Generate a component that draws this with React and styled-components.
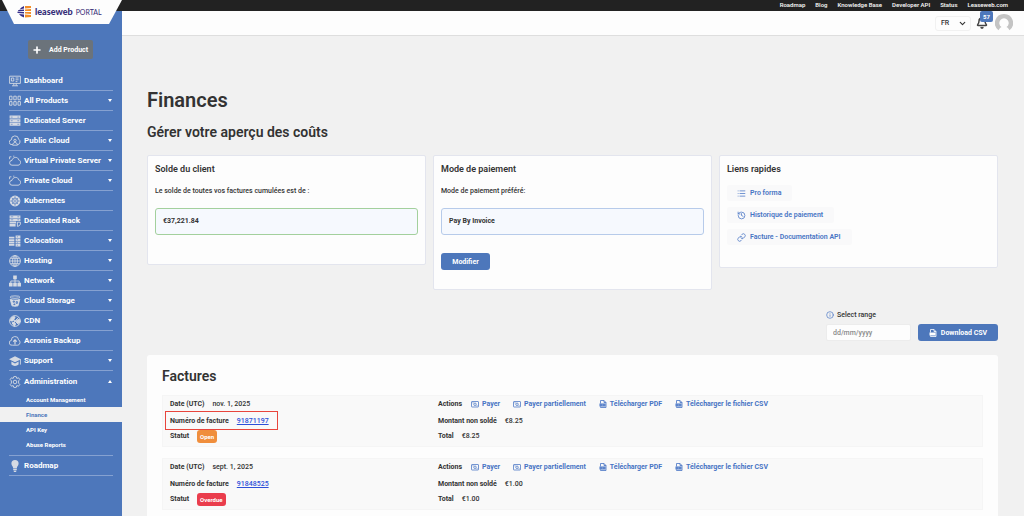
import React from "react";
import styled, { createGlobalStyle, css } from "styled-components";
import { Plus, List, History, Link, Info, Bell, ChevronDown } from "lucide-react";

const Global = createGlobalStyle`
  *, *::before, *::after { box-sizing: border-box; }
  body { margin: 0; background: #f1f1f1; color: #333; font: 500 7px/10px Roboto, sans-serif; }
  button, input, select { font: inherit; color: inherit; }
  a { text-decoration: none; color: inherit; }
  h1, h2, h3, p, ul, dl, dd { margin: 0; padding: 0; }
  ul { list-style: none; }
  svg { flex: none; display: block; }
`;

const Page = styled.div`
  display: grid;
  grid-template-columns: 122px minmax(0, 1fr);
  grid-template-rows: 11px auto;
  height: 100vh;
  overflow: hidden;
`;
const TopBar = styled.nav`
  grid-column: 1 / -1;
  display: flex;
  justify-content: flex-end;
  gap: 10px;
  padding-right: 16px;
  background: #222;
  color: #f2f2f2;
  font-size: 6px;
  font-weight: 600;
`;
const Sidebar = styled.aside`
  position: relative;
  background: #4d77bb;
  color: #fff;
  padding: 29px 9px 0;
`;
const Brand = styled.a`
  position: absolute;
  top: -11px;
  left: 0;
  width: 122px;
  height: 24px;
  display: flex;
  align-items: center;
  gap: 3px;
  padding-left: 17px;
  background: #fdfdfd;
  clip-path: polygon(2px 0, 100% 0, 109px 100%, 14px 100%);
  color: #352d77;
  font: 900 9px/12px Lato, sans-serif;
`;
const BrandTag = styled.span`
  font-size: 7px;
  font-weight: 400;
`;
const AddButton = styled.button`
  display: flex;
  align-items: center;
  gap: 7px;
  width: 65px;
  height: 19px;
  margin: 0 auto 12px 19px;
  padding: 0 4px;
  border: 0;
  border-radius: 2px;
  background: #6b737b;
  font-weight: 700;
  color: #fff;
`;
const NavItem = styled.li`
  border-bottom: ${(p) => (p.$open ? 0 : 1)}px solid #85a1d1;
`;
const NavLink = styled.a`
  display: flex;
  align-items: center;
  gap: 3px;
  height: ${(p) => (p.$open ? 21 : 19)}px;
  font-size: 8px;
  font-weight: 700;
  white-space: nowrap;
`;
const Caret = styled.span`
  margin-left: auto;
  margin-right: 1px;
  border: solid transparent;
  ${(p) => p.$up
    ? css`border-width: 0 2px 3px; border-bottom-color: #fff;`
    : css`border-width: 3px 2px 0; border-top-color: #fff;`}
`;
const SubList = styled.ul`
  margin: 0 -9px;
  padding-bottom: 3px;
  border: 0;
`;
const SubLink = styled.a`
  display: block;
  height: 15px;
  padding-left: 26px;
  font-size: 6px;
  line-height: 15px;
  font-weight: 700;
  background: ${(p) => (p.$active ? "#f1f1f1" : "none")};
  color: ${(p) => (p.$active ? "#4d77bb" : "#fff")};
`;
const Divider = styled.hr`
  margin: 0;
  border: 0;
  height: 1px;
  background: #85a1d1;
`;

const Content = styled.div`
  min-width: 0;
`;
const Header = styled.header`
  display: flex;
  justify-content: flex-end;
  align-items: center;
  gap: 5px;
  height: 25px;
  padding-right: 11px;
  background: #fdfdfd;
  border-bottom: 1px solid #dedede;
`;
const Language = styled.label`
  position: relative;
  display: flex;
  align-items: center;
  svg { position: absolute; right: 4px; pointer-events: none; }
`;
const LanguageSelect = styled.select`
  appearance: none;
  width: 36px;
  height: 15px;
  padding: 0 5px;
  border: 1px solid #f1f1f1;
  border-radius: 3px;
  background: #fdfdfd;
`;
const Alerts = styled.button`
  position: relative;
  margin-right: 2px;
  padding: 0;
  border: 0;
  background: none;
  color: #444;
`;
const Count = styled.span`
  position: absolute;
  left: 4px;
  top: -6px;
  width: 13px;
  height: 11px;
  border-radius: 2px;
  background: #4d77bb;
  color: #fff;
  font: 700 6px/11px Roboto, sans-serif;
  text-align: center;
`;

const Main = styled.main`
  padding: 52px 26px 0 25px;
`;
const Title = styled.h1`
  font-size: 20px;
  line-height: 24px;
  font-weight: 600;
`;
const Subtitle = styled.h2`
  margin: 10px 0 13px;
  font-size: 14px;
  line-height: 20px;
  font-weight: 600;
`;
const Cards = styled.div`
  display: grid;
  grid-template-columns: repeat(3, minmax(0, 1fr));
  align-items: start;
  gap: 7px;
`;
const Card = styled.section`
  padding: 7px 7px ${(p) => p.$bottom}px;
  background: #fdfdfd;
  border: 1px solid #e3e5ee;
  border-radius: 2px;
`;
const CardTitle = styled.h3`
  font-size: 9px;
  line-height: 12px;
  font-weight: 600;
`;
const CardText = styled.p`
  margin: 11px 0 12px;
`;
const Value = styled.div`
  height: 27px;
  padding: 0 7px;
  line-height: 25px;
  font-weight: 700;
  background: #f6f9fe;
  border: 1px solid ${(p) => (p.$positive ? "#a3d09d" : "#b7cbea")};
  border-radius: 3px;
`;
const Primary = styled.button`
  display: inline-flex;
  align-items: center;
  justify-content: center;
  gap: 4px;
  width: ${(p) => p.$width}px;
  height: 17px;
  padding: 0;
  border: 0;
  border-radius: 3px;
  background: #4d77bb;
  color: #fff;
  font-weight: 700;
`;
const CardFoot = styled.div`
  display: flex;
  margin-top: 18px;
`;
const QuickLinks = styled.ul`
  display: grid;
  justify-items: start;
  gap: 6px;
  margin-top: 10px;
`;
const QuickLink = styled.a`
  display: flex;
  align-items: center;
  gap: 4px;
  height: 16px;
  padding: 0 11px 0 10px;
  border-radius: 2px;
  background: #f9f9fa;
  color: #4774c4;
  font-weight: 600;
`;

const Filters = styled.form`
  display: flex;
  justify-content: flex-end;
  align-items: flex-end;
  gap: 7px;
  margin: 20px 0 14px;
`;
const Field = styled.div`
  display: grid;
  gap: 4px;
`;
const FieldLabel = styled.label`
  display: flex;
  align-items: center;
  gap: 3px;
`;
const DateInput = styled.input`
  width: 85px;
  height: 17px;
  padding: 0 6px;
  border: 1px solid #ececec;
  border-radius: 2px;
  background: #fdfdfd;
  &::placeholder { color: #8a8a8a; opacity: 1; }
`;

const Invoices = styled.section`
  padding: 12px 15px;
  background: #fdfdfd;
  border-radius: 3px;
`;
const InvoicesTitle = styled(Subtitle)`
  margin: 0 0 10px;
  line-height: 18px;
`;
const Invoice = styled.article`
  display: grid;
  grid-template-columns: minmax(0, 269fr) minmax(0, 550fr);
  height: 52px;
  margin-bottom: 11px;
  padding-left: 3px;
  background: #f9f9f9;
  border: 1px solid #f5f5f5;
`;
const Details = styled.dl`
  display: grid;
  grid-template-rows: 16px 17px 14px;
  align-content: start;
  justify-items: start;
`;
const Detail = styled.div`
  display: flex;
  align-items: center;
  gap: 8px;
  padding: 0 4px;
  white-space: nowrap;
`;
const Highlighted = styled(Detail)`
  outline: 1px solid #e8453c;
  padding-right: 8px;
`;
const Term = styled.dt`
  font-weight: 700;
`;
const InvoiceLink = styled.a`
  color: #2d50d8;
  text-decoration: underline;
`;
const Status = styled.span`
  display: block;
  padding: 0 3px;
  border-radius: 3px;
  background: ${(p) => (p.$overdue ? "#ea3d4c" : "#f08e3c")};
  color: #fff;
  font-size: 6px;
  line-height: 13px;
  font-weight: 700;
`;
const Actions = styled.dd`
  display: flex;
  gap: 13px;
  margin-left: 1px;
`;
const Action = styled.a`
  display: flex;
  align-items: center;
  gap: 3px;
  color: #4774c4;
  font-weight: 700;
`;

const glyphs = {
  dashboard: <><path d="M1 2h18v12H1zM8 14v4M12 14v4M5 18h10" /><path d="M4 5h4v5H4zM11 5h5M11 8h5M11 11h3" /></>,
  products: <path d="M1 2h4v6H1zM8 2h4v6H8zM15 2h4v6h-4zM1 11h4v6H1zM8 11h4v6H8zM15 11h4v6h-4z" />,
  server: <><path fill="currentColor" stroke="none" d="M1 1h18v5H1zM1 7h18v5H1zM1 13h18v5H1z" /><path stroke="#4d77bb" strokeWidth="1" d="M3 3.500h3M3 9.500h3M3 15.500h3M14 3.500h3M14 9.500h3M14 15.500h3" /></>,
  publicCloud: <><path d="M6 16H5a4 4 0 0 1-1-8 6 6 0 0 1 12-1 5 5 0 0 1-1 9h-1" /><circle cx="10" cy="9" r="2" /><path d="M6 17c0-6 8-6 8 0z" /></>,
  cloud: <><path d="M5 17a4 4 0 0 1 0-8c1-6 10-7 11-1 5 1 4 9-1 9z" /><path d="M1 7V3h3M7 2h2" /></>,
  helm: <><circle cx="10" cy="10" r="9" fill="currentColor" stroke="none" /><g stroke="#4d77bb" strokeWidth="1"><circle cx="10" cy="10" r="5" /><circle cx="10" cy="10" r="1" /><path d="M10 2v6M10 12v6M2 10h6M12 10h6M4.500 4.500l4 4M11.500 11.500l4 4M4.500 15.500l4-4M11.500 8.500l4-4" /></g></>,
  rack: <><path fill="currentColor" stroke="none" d="M1 1h18v4H1zM1 6h18v4H1zM1 11h11v3H1zM1 15h10v4H1z" /><path stroke="#4d77bb" strokeWidth="1" d="M3 3h4M3 8h4M14 3h3M14 8h3" /><path d="M14 12h5v3c0 3-5 4-5 4z" /></>,
  colocation: <><path fill="currentColor" stroke="none" d="M0 3h9v3H0zM0 7h9v3H0zM0 11h9v3H0zM0 15h9v3H0zM11 1h8v4h-8zM11 6h8v4h-8zM11 11h8v3h-8zM11 15h8v4h-8z" /><path stroke="#4d77bb" strokeWidth="1" d="M13 3h2M13 8h2M13 13h2M13 17h2" /></>,
  globe: <><circle cx="10" cy="10" r="9" /><ellipse cx="10" cy="10" rx="4" ry="9" /><path d="M10 1v18M1 10h18M2.500 5.500h15M2.500 14.500h15" /></>,
  network: <><path fill="currentColor" stroke="none" d="M7 1h6v6H7zM0 13h6v6H0zM7 13h6v6H7zM14 13h6v6h-6z" /><path d="M10 6v8M3 14v-4h14v4" /></>,
  bucket: <><ellipse cx="10" cy="3.500" rx="8" ry="2" /><path fill="currentColor" d="M2 7c4 2 12 2 16 0l-3 11c-3 1-7 1-10 0z" /><path stroke="#4d77bb" d="M7 10h2v2H7zM12 11h2v3h-2zM8 15h2v1H8z" /></>,
  cdn: <><circle cx="10" cy="10" r="9" /><path fill="currentColor" d="M4 5c3-3 6-3 6-1s-2 2-2 4-4 3-6 1zM12 9l5-2 2 4-3 3-3-1zM5 13l4-1 2 3-2 4z" /><path d="M4 4l12 12M16 4L5 15" /></>,
  backup: <><path d="M6 17H5a4 4 0 0 1-1-8 6 6 0 0 1 12-1 5 5 0 0 1-1 9h-1z" /><path d="M10 16V8M7 11l3-3 3 3" strokeWidth="2" /></>,
  support: <><path fill="currentColor" stroke="none" d="M0 7l10-5 10 5-10 5z" /><path fill="currentColor" stroke="none" d="M4 11l6 3 6-3v5c-3 3-9 3-12 0z" /><path d="M19 7v9" /></>,
  gear: <><circle cx="10" cy="10" r="3" /><path d="M8 1h4l1 3 3-1 2 3-2 2v4l2 2-2 3-3-1-1 3H8l-1-3-3 1-2-3 2-2V8L2 6l2-3 3 1z" /></>,
  bulb: <path fill="currentColor" stroke="none" d="M10 0a6 6 0 0 1 6 6c0 4-3 4-3 8H7c0-4-3-4-3-8a6 6 0 0 1 6-6zM7 15h6v2H7zM8 18h4v2H8z" />,
};
const NavIcon = ({ name }) => (
  <svg width="12" height="12" viewBox="0 0 20 20" fill="none" stroke="currentColor" strokeWidth="1.500" color="#d5dae3" aria-hidden="true">{glyphs[name]}</svg>
);
const LogoMark = () => (
  <svg width="15" height="12" viewBox="0 0 30 24" aria-hidden="true">
    <g fill="#352d8a"><path d="M14 0v5L5 7q3-5 9-7zM14 7v3L1 11l2-3zM14 12v3L1 14v-2zM14 17v6Q7 21 4 16z" /></g>
    <g fill="#f28c28"><path d="M16 0h12v4l-12 1zM16 7l12-1v4l-12 0zM16 12h12v4l-12-1zM16 17l12 1v4l-12 1z" /></g>
  </svg>
);
const Avatar = () => (
  <svg width="18" height="18" viewBox="0 0 18 18" role="img" aria-label="Profile">
    <path fill="#c4c4c4" d="M9 0a9 9 0 0 1 5.500 16.200Q13 13.500 11.500 13a4.700 4.700 0 1 0-5 0Q5 13.500 3.500 16.200A9 9 0 0 1 9 0z" />
  </svg>
);
const MoneyIcon = () => (
  <svg width="8" height="8" viewBox="0 0 16 16" fill="none" stroke="currentColor" strokeWidth="1.500" aria-hidden="true">
    <rect x="1" y="3" width="14" height="11" rx="1" /><circle cx="8" cy="8.500" r="2.500" /><path d="M3 5.500h2M11 11.500h2" />
  </svg>
);
const FileIcon = () => (
  <svg width="8" height="8" viewBox="0 0 16 16" fill="none" stroke="currentColor" strokeWidth="1.600" aria-hidden="true">
    <path d="M3 7V1h7l4 4v10H3v-2M10 1v4h4" /><path fill="currentColor" stroke="none" d="M1 7h12v6H1z" /><path stroke="#fff" strokeWidth="1" d="M4 9v2M7 9v2M10 9v2" />
  </svg>
);

const nav = [
  ["Dashboard", "dashboard"], ["All Products", "products", true], ["Dedicated Server", "server"],
  ["Public Cloud", "publicCloud", true], ["Virtual Private Server", "cloud", true], ["Private Cloud", "cloud", true],
  ["Kubernetes", "helm"], ["Dedicated Rack", "rack"], ["Colocation", "colocation", true], ["Hosting", "globe", true],
  ["Network", "network", true], ["Cloud Storage", "bucket", true], ["CDN", "cdn", true], ["Acronis Backup", "backup"],
  ["Support", "support", true],
];
const invoices = [
  { date: "nov. 1, 2025", number: "91871197", status: "Open", amount: "€8.25", marked: true },
  { date: "sept. 1, 2025", number: "91848525", status: "Overdue", amount: "€1.00" },
];
const actions = [
  ["Payer", MoneyIcon], ["Payer partiellement", MoneyIcon], ["Télécharger PDF", FileIcon], ["Télécharger le fichier CSV", FileIcon],
];

function InvoiceRow({ invoice }) {
  const NumberLine = invoice.marked ? Highlighted : Detail;
  return (
    <Invoice>
      <Details>
        <Detail><Term>Date (UTC)</Term><dd>{invoice.date}</dd></Detail>
        <NumberLine><Term>Numéro de facture</Term><dd><InvoiceLink href="#">{invoice.number}</InvoiceLink></dd></NumberLine>
        <Detail><Term>Statut</Term><dd><Status $overdue={invoice.status === "Overdue"}>{invoice.status}</Status></dd></Detail>
      </Details>
      <Details>
        <Detail>
          <Term>Actions</Term>
          <Actions>
            {actions.map(([label, Icon]) => <Action href="#" key={label}><Icon />{label}</Action>)}
          </Actions>
        </Detail>
        <Detail><Term>Montant non soldé</Term><dd>{invoice.amount}</dd></Detail>
        <Detail><Term>Total</Term><dd>{invoice.amount}</dd></Detail>
      </Details>
    </Invoice>
  );
}

export default function App() {
  return (
    <Page>
      <Global />
      <TopBar>
        {["Roadmap", "Blog", "Knowledge Base", "Developer API", "Status", "Leaseweb.com"].map((t) => <a href="#" key={t}>{t}</a>)}
      </TopBar>
      <Sidebar>
        <Brand href="#"><LogoMark />leaseweb <BrandTag>PORTAL</BrandTag></Brand>
        <AddButton><Plus size={10} strokeWidth={4} />Add Product</AddButton>
        <ul>
          {nav.map(([label, icon, more]) => (
            <NavItem key={label}><NavLink href="#"><NavIcon name={icon} />{label}{more && <Caret />}</NavLink></NavItem>
          ))}
          <NavItem $open>
            <NavLink href="#" $open><NavIcon name="gear" />Administration<Caret $up /></NavLink>
            <SubList>
              {["Account Management", "Finance", "API Key", "Abuse Reports"].map((t) => (
                <li key={t}><SubLink href="#" $active={t === "Finance"}>{t}</SubLink></li>
              ))}
            </SubList>
            <Divider />
          </NavItem>
          <NavItem><NavLink href="#"><NavIcon name="bulb" />Roadmap</NavLink></NavItem>
        </ul>
      </Sidebar>
      <Content>
        <Header>
          <Language>
            <LanguageSelect aria-label="Language" defaultValue="FR"><option>FR</option></LanguageSelect>
            <ChevronDown size={9} strokeWidth={3} />
          </Language>
          <Alerts aria-label="Notifications"><Bell size={12} strokeWidth={3} /><Count>57</Count></Alerts>
          <Avatar />
        </Header>
        <Main>
          <Title>Finances</Title>
          <Subtitle>Gérer votre aperçu des coûts</Subtitle>
          <Cards>
            <Card $bottom={29}>
              <CardTitle>Solde du client</CardTitle>
              <CardText>Le solde de toutes vos factures cumulées est de :</CardText>
              <Value $positive>€37,221.84</Value>
            </Card>
            <Card $bottom={19}>
              <CardTitle>Mode de paiement</CardTitle>
              <CardText>Mode de paiement préféré:</CardText>
              <Value>Pay By Invoice</Value>
              <CardFoot><Primary $width={49}>Modifier</Primary></CardFoot>
            </Card>
            <Card $bottom={22}>
              <CardTitle>Liens rapides</CardTitle>
              <QuickLinks>
                <li><QuickLink href="#"><List size={9} />Pro forma</QuickLink></li>
                <li><QuickLink href="#"><History size={9} />Historique de paiement</QuickLink></li>
                <li><QuickLink href="#"><Link size={9} />Facture - Documentation API</QuickLink></li>
              </QuickLinks>
            </Card>
          </Cards>
          <Filters>
            <Field>
              <FieldLabel htmlFor="range"><Info size={8} color="#4774c4" />Select range</FieldLabel>
              <DateInput id="range" placeholder="dd/mm/yyyy" />
            </Field>
            <Primary $width={80} type="button"><FileIcon />Download CSV</Primary>
          </Filters>
          <Invoices>
            <InvoicesTitle>Factures</InvoicesTitle>
            {invoices.map((i) => <InvoiceRow key={i.number} invoice={i} />)}
          </Invoices>
        </Main>
      </Content>
    </Page>
  );
}
